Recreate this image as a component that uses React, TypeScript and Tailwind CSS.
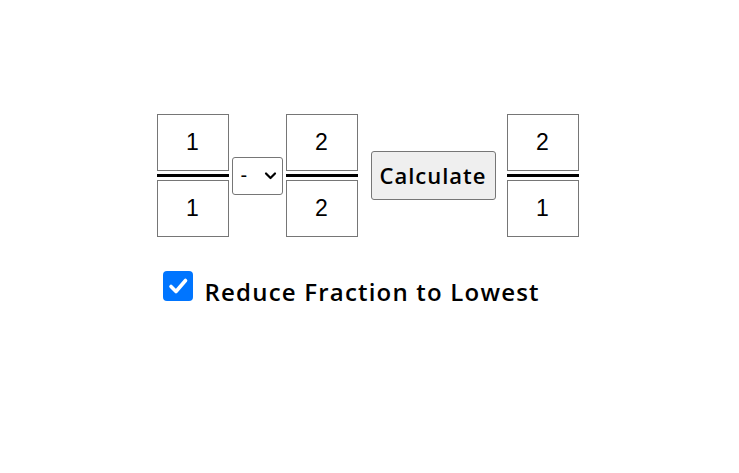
import React, { useState } from "react";

const Fraction = ({ top, bottom }: { top: string; bottom: string }) => {
  return (
    <div className="flex flex-col w-[72px]">
      <input
        value={top}
        readOnly
        className="h-[57px] w-[72px] border border-[#767676] text-center text-[23px] text-black outline-none font-['Liberation_Sans',Arial,sans-serif]"
      />
      <div className="h-[3px] bg-black my-[3px]" />
      <input
        value={bottom}
        readOnly
        className="h-[57px] w-[72px] border border-[#767676] text-center text-[23px] text-black outline-none font-['Liberation_Sans',Arial,sans-serif]"
      />
    </div>
  );
};

export default function App() {
  const [reduce, setReduce] = useState(true);

  return (
    <div className="w-[739px] h-[473px] bg-white flex justify-center pt-[114px]">
      <div className="flex flex-col w-[422px] -ml-[4px]">
        <div className="flex items-center">
          <Fraction top="1" bottom="1" />
          <div className="ml-[3px] mr-[3px] h-[38px] w-[51px] border border-[#767676] rounded-[3px] flex items-center justify-between pl-[8px] pr-[5px] text-[20px] font-['Liberation_Sans',Arial,sans-serif]">
            <span className="leading-none -mt-[2px]">-</span>
            <svg width="13" height="9" viewBox="0 0 13 9" fill="none">
              <path d="M2 2.5 L6.5 7 L11 2.5" stroke="#000" strokeWidth="2.2" strokeLinecap="round" strokeLinejoin="round" />
            </svg>
          </div>
          <Fraction top="2" bottom="2" />
          <button className="ml-[13px] mr-[11px] h-[49px] w-[125px] bg-[#efefef] border border-[#767676] rounded-[3px] text-[22px] font-semibold text-black font-['Open_Sans',sans-serif] tracking-[1px]">
            Calculate
          </button>
          <Fraction top="2" bottom="1" />
        </div>
        <label className="flex items-end mt-[34px] ml-[6px] cursor-pointer select-none">
          <span
            onClick={() => setReduce(!reduce)}
            className={`h-[30px] w-[30px] rounded-[4px] flex items-center justify-center mb-[6px] ${reduce ? "bg-[#0075ff]" : "bg-white border border-[#767676]"}`}
          >
            {reduce && (
              <svg width="22" height="22" viewBox="0 0 22 22" fill="none">
                <path d="M4 11.5 L9 16.5 L18.5 5.5" stroke="#fff" strokeWidth="3.6" strokeLinecap="round" strokeLinejoin="round" />
              </svg>
            )}
          </span>
          <span className="ml-[12px] text-[24px] font-semibold text-black leading-[30px] font-['Open_Sans',sans-serif] tracking-[1.2px]">
            Reduce Fraction to Lowest
          </span>
        </label>
      </div>
    </div>
  );
}
